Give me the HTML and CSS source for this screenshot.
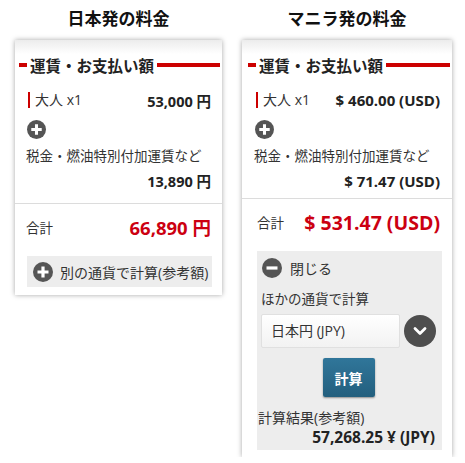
FILE: index.html
```html
<!DOCTYPE html>
<html lang="ja">
<head>
<meta charset="utf-8">
<title>料金</title>
<link rel="stylesheet" href="styles.css">
</head>
<body>
<div class="page">
  <section class="col col--jp">
    <h2 class="col-title">日本発の料金</h2>
    <div class="card">
      <div class="card-head"><span>運賃・お支払い額</span></div>
      <div class="fare-row">
        <span class="fare-label">大人 x1</span>
        <span class="fare-value">53,000 円</span>
      </div>
      <span class="round-icon plus-icon"><svg viewBox="0 0 20 20" width="19" height="19"><path d="M10 4.5v11M4.5 10h11" stroke="#fff" stroke-width="3.2" stroke-linecap="butt"/></svg></span>
      <div class="tax-label">税金・燃油特別付加運賃など</div>
      <div class="tax-value">13,890 円</div>
      <div class="divider"></div>
      <div class="total-row">
        <span class="total-label">合計</span>
        <span class="total-value">66,890 円</span>
      </div>
      <div class="calc-toggle">
        <span class="round-icon"><svg viewBox="0 0 20 20" width="20" height="20"><path d="M10 4.5v11M4.5 10h11" stroke="#fff" stroke-width="3.2"/></svg></span>
        <span>別の通貨で計算(参考額)</span>
      </div>
    </div>
  </section>

  <section class="col col--mnl">
    <h2 class="col-title">マニラ発の料金</h2>
    <div class="card card--usd">
      <div class="card-head"><span>運賃・お支払い額</span></div>
      <div class="fare-row">
        <span class="fare-label">大人 x1</span>
        <span class="fare-value">$ 460.00 (USD)</span>
      </div>
      <span class="round-icon plus-icon"><svg viewBox="0 0 20 20" width="19" height="19"><path d="M10 4.5v11M4.5 10h11" stroke="#fff" stroke-width="3.2"/></svg></span>
      <div class="tax-label">税金・燃油特別付加運賃など</div>
      <div class="tax-value">$ 71.47 (USD)</div>
      <div class="divider"></div>
      <div class="total-row">
        <span class="total-label">合計</span>
        <span class="total-value">$ 531.47 (USD)</span>
      </div>
      <div class="calc-panel">
        <div class="close-row">
          <span class="round-icon"><svg viewBox="0 0 20 20" width="20" height="20"><path d="M4.5 10h11" stroke="#fff" stroke-width="3.2"/></svg></span>
          <span>閉じる</span>
        </div>
        <div class="calc-sub">ほかの通貨で計算</div>
        <div class="select-row">
          <div class="select-box">日本円 (JPY)</div>
          <span class="select-btn"><svg viewBox="0 0 32 32" width="32" height="32"><path d="M11 13.5l5 5 5-5" fill="none" stroke="#fff" stroke-width="2.8" stroke-linecap="round" stroke-linejoin="round"/></svg></span>
        </div>
        <div class="btn-wrap"><button class="calc-btn" type="button">計算</button></div>
        <div class="result-label">計算結果(参考額)</div>
        <div class="result-value">57,268.25 ¥ (JPY)</div>
      </div>
    </div>
  </section>
</div>
</body>
</html>
```

FILE: styles.css
```css
* { box-sizing: border-box; }

body {
  margin: 0;
  background: #fff;
  color: #333;
  font-family: "Open Sans", "Noto Sans CJK JP", sans-serif;
}

.page {
  display: flex;
  align-items: flex-start;
  gap: 20px;
  padding-left: 15px;
}

.col--jp { width: 207px; }
.col--mnl { width: 210px; }

.col-title {
  margin: 0 0 10px;
  padding-top: 6px;
  line-height: 24px;
  font-size: 17px;
  font-weight: 700;
  text-align: center;
  color: #111;
  font-family: "Noto Sans CJK JP", sans-serif;
}

.card {
  background: linear-gradient(#ececec, #fff 14px);
  box-shadow: 0 0 5px rgba(0, 0, 0, 0.35);
  padding: 15px 0 8px;
}
.card--usd { padding-bottom: 7px; }

.card-head {
  display: flex;
  align-items: center;
  height: 20px;
  margin: 0 2px 0 4px;
  font-family: "Noto Sans CJK JP", sans-serif;
  font-size: 15.5px;
  font-weight: 700;
  color: #222;
}
.card-head::before {
  content: "";
  width: 8px;
  height: 4px;
  background: #cc0000;
  margin-right: 3px;
}
.card-head::after {
  content: "";
  flex: 1;
  height: 4px;
  background: #cc0000;
  margin-left: 3px;
}
.card--usd .card-head { margin-left: 6px; }

.fare-row {
  display: flex;
  justify-content: space-between;
  align-items: center;
  height: 20px;
  margin-top: 15px;
  padding: 0 11px 0 13px;
}
.card--usd .fare-row { padding-left: 14px; padding-right: 12px; }

.fare-label {
  border-left: 2px solid #cc0000;
  padding-left: 5px;
  line-height: 16px;
  font-size: 14px;
  color: #333;
}
.fare-value {
  font-size: 14.5px;
  font-weight: 700;
  color: #222;
}
.card--usd .fare-value { font-size: 15px; }

.round-icon {
  display: inline-flex;
  border-radius: 50%;
  background: #555;
}
.plus-icon {
  margin: 10px 0 0 12px;
}
.card--usd .plus-icon { margin-left: 13px; }

.tax-label {
  margin-top: 3px;
  padding: 0 11px;
  line-height: 18px;
  font-size: 13.5px;
  color: #333;
}
.card--usd .tax-label { padding-left: 12px; }

.tax-value {
  margin-top: 7px;
  padding: 0 11px;
  line-height: 20px;
  text-align: right;
  font-size: 14.5px;
  font-weight: 700;
  color: #222;
}
.card--usd .tax-value { margin-top: 6px; padding-right: 12px; font-size: 15px; }

.divider {
  margin-top: 11px;
  border-top: 1px solid #dcdcdc;
}
.card--usd .divider { margin-top: 7px; }

.total-row {
  display: flex;
  justify-content: space-between;
  align-items: center;
  height: 26px;
  margin-top: 10px;
  padding: 0 11px;
}
.card--usd .total-row { margin-top: 10px; padding: 0 12px 0 15px; }

.total-label {
  font-size: 13.5px;
  color: #333;
}
.total-value {
  font-size: 18.5px;
  font-weight: 700;
  color: #cc0011;
}
.card--usd .total-value { font-size: 19.5px; }

.calc-toggle {
  display: flex;
  align-items: center;
  gap: 7px;
  height: 31px;
  margin: 16px 10px 0 12px;
  padding-left: 6px;
  background: #ededed;
  font-size: 14px;
  color: #333;
}

.calc-panel {
  margin: 16px 10px 0 15px;
  padding: 7px 6px 3px 4px;
  background: #ededed;
  color: #333;
}

.close-row {
  display: flex;
  align-items: center;
  gap: 8px;
  height: 20px;
  padding-left: 1px;
  font-size: 14px;
}

.calc-sub {
  margin-top: 12px;
  line-height: 18px;
  font-size: 13.5px;
}

.select-row {
  display: flex;
  align-items: center;
  gap: 4px;
  margin-top: 6px;
}
.select-box {
  width: 140px;
  height: 34px;
  line-height: 32px;
  padding-left: 9px;
  background: linear-gradient(#fff, #f2f2f2);
  border: 1px solid #e0e0e0;
  border-radius: 2px;
  font-size: 14px;
  color: #333;
}
.select-btn {
  display: inline-flex;
  width: 32px;
  height: 32px;
  border-radius: 50%;
  background: #4e4e4e;
}

.btn-wrap {
  display: flex;
  justify-content: center;
  margin-top: 10px;
}
.calc-btn {
  width: 52px;
  height: 39px;
  border: 0;
  border-radius: 2px;
  background: linear-gradient(#30769a, #235f7e);
  box-shadow: 0 1px 2px rgba(0, 0, 0, 0.4);
  color: #fff;
  font-family: "Noto Sans CJK JP", sans-serif;
  font-size: 14px;
  font-weight: 700;
  padding: 0;
}

.result-label {
  margin-top: 12px;
  margin-left: -3px;
  line-height: 18px;
  font-size: 14px;
}
.result-value {
  line-height: 20px;
  padding-right: 1px;
  text-align: right;
  font-size: 15.5px;
  font-weight: 700;
  color: #222;
}
```
